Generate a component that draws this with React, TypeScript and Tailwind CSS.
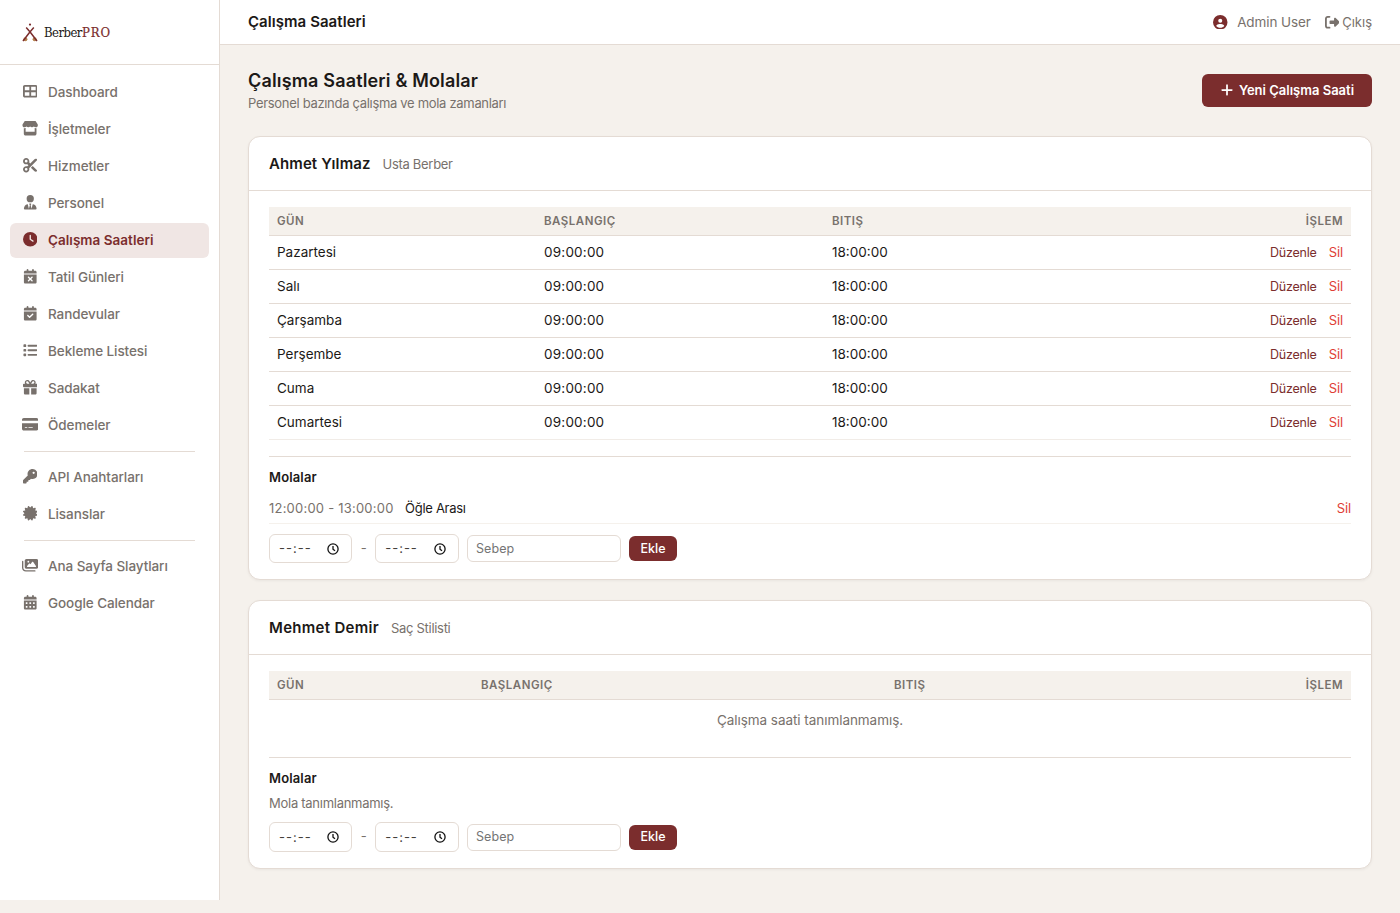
import React from "react";
import {
  FaTableCellsLarge, FaStore, FaScissors, FaUserTie, FaClock, FaCalendarXmark, FaCalendarCheck,
  FaList, FaGift, FaCreditCard, FaKey, FaCertificate, FaImages, FaCalendarDays, FaCircleUser,
  FaRightFromBracket, FaPlus,
} from "react-icons/fa6";

type Item = { label: string; icon: React.ComponentType<{ className?: string }>; active?: boolean; wide?: boolean };

const groups: Item[][] = [
  [
    { label: "Dashboard", icon: FaTableCellsLarge },
    { label: "İşletmeler", icon: FaStore, wide: true },
    { label: "Hizmetler", icon: FaScissors },
    { label: "Personel", icon: FaUserTie },
    { label: "Çalışma Saatleri", icon: FaClock, active: true },
    { label: "Tatil Günleri", icon: FaCalendarXmark },
    { label: "Randevular", icon: FaCalendarCheck },
    { label: "Bekleme Listesi", icon: FaList },
    { label: "Sadakat", icon: FaGift },
    { label: "Ödemeler", icon: FaCreditCard, wide: true },
  ],
  [
    { label: "API Anahtarları", icon: FaKey },
    { label: "Lisanslar", icon: FaCertificate },
  ],
  [
    { label: "Ana Sayfa Slaytları", icon: FaImages, wide: true },
    { label: "Google Calendar", icon: FaCalendarDays },
  ],
];

function Logo() {
  return (
    <div className="flex h-[65px] shrink-0 items-center border-b border-[#e4dbd4] pl-[22px]">
      <svg width="16" height="19" viewBox="0 0 16 19" className="mr-[6px]">
        <circle cx="3.4" cy="16.2" r="2" fill="#b5834f" />
        <circle cx="12.6" cy="16.2" r="2" fill="#b5834f" />
        <path d="M4.2 4.6 L8.3 9.2 L15 18 M11.8 4.6 L7.7 9.2 L1 18" stroke="#7b2d2d" strokeWidth="1.5" fill="none" />
        <circle cx="8" cy="1.6" r="1.1" fill="#7b2d2d" />
      </svg>
      <span className="flex pt-px font-['DejaVu_Serif_Condensed','DejaVu_Serif',serif] text-[13px] text-[#1c1917]">
        <span className="w-[38px] tracking-[-0.55px] [font-stretch:condensed]">Berber</span>
        <span className="tracking-[0.9px] text-[#7b2d2d] [font-stretch:condensed] [-webkit-text-stroke:0.2px_#7b2d2d]">PRO</span>
      </span>
    </div>
  );
}

function Sidebar() {
  return (
    <aside className="flex h-[900px] w-[220px] shrink-0 flex-col border-r border-[#e4dbd4] bg-white">
      <Logo />
      <nav className="px-[10px] pt-[10px]">
        {groups.map((g, i) => (
          <div key={i} className={i ? "mt-2" : ""}>
            {i > 0 && <div className="mx-[14px] mb-2 h-px bg-[#e4dbd4]" />}
            <div className="flex flex-col gap-[2px]">
              {g.map(({ label, icon: Icon, active, wide }) => (
                <a
                  key={label}
                  className={
                    "flex h-[35px] items-center gap-[10px] rounded-[6px] px-3 text-[13.5px] " +
                    (active ? "bg-[#f0e6e4] font-semibold tracking-[0.03px] text-[#7b2d2d]" : "font-medium tracking-[-0.08px] text-[#78716c]")
                  }
                >
                  <span className="flex w-4 justify-center pb-[2px]">
                    <Icon className={wide ? "h-[14.5px] w-[16.3px] shrink-0" : "h-[14.5px] w-[14.5px] shrink-0"} />
                  </span>
                  <span className="whitespace-nowrap">{label}</span>
                </a>
              ))}
            </div>
          </div>
        ))}
      </nav>
    </aside>
  );
}

function TimeInput() {
  return (
    <div className="flex h-full w-[83.4px] shrink-0 items-center justify-between rounded-[6px] border border-[#e4dbd4] pr-[12px] pl-[9px] text-[13px] text-[#44403c]">
      <span className="pt-px tracking-[1px]">--:--</span>
      <svg width="12" height="12" viewBox="0 0 12 12" fill="none" stroke="#111" strokeWidth="1.3">
        <circle cx="6" cy="6" r="5.1" />
        <path d="M6 3 V6.2 L8 7.8" />
      </svg>
    </div>
  );
}

function BreakForm({ size }: { size: string }) {
  return (
    <div className={"flex items-center text-[13px] " + size}>
      <TimeInput />
      <span className="w-[22.8px] text-center text-[#78716c]">-</span>
      <TimeInput />
      <div className="ml-[8.4px] flex h-[27px] w-[154px] items-center rounded-[6px] border border-[#e4dbd4] px-2 pt-px text-[12.5px] tracking-[0.1px] text-[#757575]">Sebep</div>
      <button className="ml-2 h-[25px] w-12 rounded-[6px] bg-[#7b2d2d] pt-px text-[12.5px] font-medium text-white">Ekle</button>
    </div>
  );
}

const days = ["Pazartesi", "Salı", "Çarşamba", "Perşembe", "Cuma", "Cumartesi"];

function HeadRow({ cols }: { cols: string }) {
  return (
    <div className={"grid h-[29px] items-center border-b border-[#e4dbd4] bg-[#f5f1ec] pt-px text-[11.5px] font-semibold tracking-[0.5px] text-[#78716c] " + cols}>
      <span className="pl-2">GÜN</span>
      <span className="pl-2">BAŞLANGIÇ</span>
      <span className="pl-2">BITIŞ</span>
      <span className="pr-2 text-right">İŞLEM</span>
    </div>
  );
}

function Card({ name, role, nameStyle, children }: { name: string; role: string; nameStyle: string; children: React.ReactNode }) {
  return (
    <section className="rounded-[12px] border border-[#e4dbd4] bg-white shadow-[0_1px_3px_rgba(0,0,0,0.05)]">
      <header className="flex h-[54px] items-center border-b border-[#e4dbd4] px-5 pt-[2px]">
        <h3 className={"text-[15px] font-semibold " + nameStyle}>{name}</h3>
        <span className="ml-3 text-[13px] tracking-[-0.3px] text-[#78716c]">{role}</span>
      </header>
      <div className="px-5 pt-4">{children}</div>
    </section>
  );
}

export default function App() {
  return (
    <div className="flex h-[913px] w-[1400px] overflow-hidden bg-[#f5f1ec] font-['Inter',sans-serif] text-[#1c1917]">
      <Sidebar />
      <div className="flex min-w-0 flex-1 flex-col">
        <header className="flex h-[45px] shrink-0 items-center justify-between border-b border-[#e4dbd4] bg-white px-7">
          <h1 className="text-[15px] font-semibold tracking-[0.06px]">Çalışma Saatleri</h1>
          <div className="flex items-center text-[13.5px] text-[#78716c]">
            <FaCircleUser className="mr-[9.5px] h-[14.5px] w-[14.5px] text-[#7b2d2d]" />
            <span className="tracking-[-0.1px]">Admin User</span>
            <FaRightFromBracket className="mr-[3px] ml-[14px] h-[14.5px] w-[14.5px]" />
            <span className="pt-px text-[13px]">Çıkış</span>
          </div>
        </header>
        <main className="px-7 pt-[21px]">
          <div className="mb-[22px] flex h-[48px] items-center justify-between">
            <div>
              <h2 className="text-[18px] leading-[27px] font-semibold tracking-[0.16px]">Çalışma Saatleri &amp; Molalar</h2>
              <p className="text-[13px] leading-[19px] tracking-[-0.31px] text-[#78716c]">Personel bazında çalışma ve mola zamanları</p>
            </div>
            <button className="flex h-[33px] w-[170px] items-center justify-center gap-[5px] rounded-[6px] bg-[#7b2d2d] text-[13px] font-semibold text-white">
              <FaPlus className="h-[14px] w-auto" />
              <span className="pt-px">Yeni Çalışma Saati</span>
            </button>
          </div>
          <div className="flex flex-col gap-5">
            <Card name="Ahmet Yılmaz" role="Usta Berber" nameStyle="tracking-[0.1px]">
              <HeadRow cols="grid-cols-[267px_288px_1fr_200px]" />
              {days.map((d) => (
                <div key={d} className="grid h-[34px] grid-cols-[267px_288px_1fr_200px] items-center border-b border-[#e4dbd4] text-[13.5px] nth-[7]:border-[#f1ece7]">
                  <span className="pl-2">{d}</span>
                  <span className="pl-2 tracking-[0.2px]">09:00:00</span>
                  <span className="pl-2">18:00:00</span>
                  <span className="flex items-center justify-end gap-3 pr-2">
                    <a className="pt-px text-[12.5px] tracking-[-0.2px] text-[#7b2d2d]">Düzenle</a>
                    <a className="text-[13px] tracking-[-0.1px] text-[#e03e36]">Sil</a>
                  </span>
                </div>
              ))}
              <div className="mt-4 h-[123px] border-t border-[#e4dbd4] pt-[10px]">
                <h4 className="text-[13px] leading-5 font-semibold tracking-[0.15px]">Molalar</h4>
                <div className="mt-1 mb-[10px] flex h-[33px] items-center border-b border-[#f5f1ec] pt-[3px] text-[13px]">
                  <span className="tracking-[0.22px] text-[#78716c]">12:00:00 - 13:00:00</span>
                  <span className="ml-[11.5px] tracking-[-0.3px]">Öğle Arası</span>
                  <a className="ml-auto tracking-[-0.1px] text-[#e03e36]">Sil</a>
                </div>
                <BreakForm size="h-[29px]" />
              </div>
            </Card>
            <Card name="Mehmet Demir" role="Saç Stilisti" nameStyle="tracking-[0.3px]">
              <HeadRow cols="grid-cols-[204px_413px_1fr_200px]" />
              <div className="flex h-[41px] items-center justify-center text-[13.5px] tracking-[-0.05px] text-[#78716c]">Çalışma saati tanımlanmamış.</div>
              <div className="mt-4 h-[111px] border-t border-[#e4dbd4] pt-[10px]">
                <h4 className="text-[13px] leading-5 font-semibold tracking-[0.15px]">Molalar</h4>
                <p className="mt-[5px] mb-[9px] text-[13px] leading-5 tracking-[-0.27px] text-[#78716c]">Mola tanımlanmamış.</p>
                <BreakForm size="h-[30px]" />
              </div>
            </Card>
          </div>
        </main>
      </div>
    </div>
  );
}
